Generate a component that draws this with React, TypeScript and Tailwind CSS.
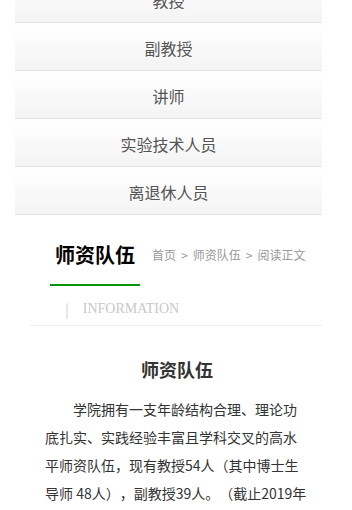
import React from "react";

const items = ["教授", "副教授", "讲师", "实验技术人员", "离退休人员"];
const cjk = { fontFamily: '"Noto Sans CJK SC", "Noto Sans", sans-serif' };

export default function App() {
  return (
    <div className="w-[352px] h-[510px] overflow-hidden bg-white [text-spacing-trim:space-all]" style={cjk}>
      <div className="ml-[15px] w-[307px] -mt-[25px]">
        {items.map((t) => (
          <div
            key={t}
            className="h-12 border-b border-[#e3e3e3] bg-gradient-to-b from-white to-[#f4f4f4] flex items-center justify-center text-[16px] text-[#555] pt-[2px]"
          >
            {t}
          </div>
        ))}
      </div>

      <div className="flex items-start pl-[50px]">
        <div className="px-[5px] pt-[20px] pb-[9px] border-b-2 border-[#0a940a]">
          <div className="text-[20px] leading-[40px] font-bold text-black">师资队伍</div>
        </div>
        <div className="ml-[12px] mt-[20px] leading-[40px] text-[12px] text-[#999] flex items-center">
          <span>首页</span>
          <span className="mx-[5px]">&gt;</span>
          <span>师资队伍</span>
          <span className="mx-[5px]">&gt;</span>
          <span>阅读正文</span>
        </div>
      </div>

      <div className="ml-[30px] w-[292px] border-b border-[#eee] pt-[8px] pb-[2px] flex items-center h-[40px]">
        <span className="ml-[35px] text-[14px] leading-[30px] text-[#d0d0d0]">|</span>
        <span
          className="ml-[14px] text-[14px] leading-[30px] text-[#c8c8c8]"
          style={{ fontFamily: '"Liberation Serif", serif' }}
        >
          INFORMATION
        </span>
      </div>

      <div className="ml-[45px] w-[264px]">
        <div className="pt-[28px] text-center text-[18px] leading-[30px] font-bold text-[#333]">
          师资队伍
        </div>
        <p className="mt-[11px] text-[14px] leading-[28px] text-[#333] indent-[28px]">
          学院拥有一支年龄结构合理、理论功底扎实、实践经验丰富且学科交叉的高水平师资队伍，现有教授54人（其中博士生导师 48人），副教授39人。（截止2019年12月）学院现有教职工多人，其中专任教师多人。
        </p>
      </div>
    </div>
  );
}
